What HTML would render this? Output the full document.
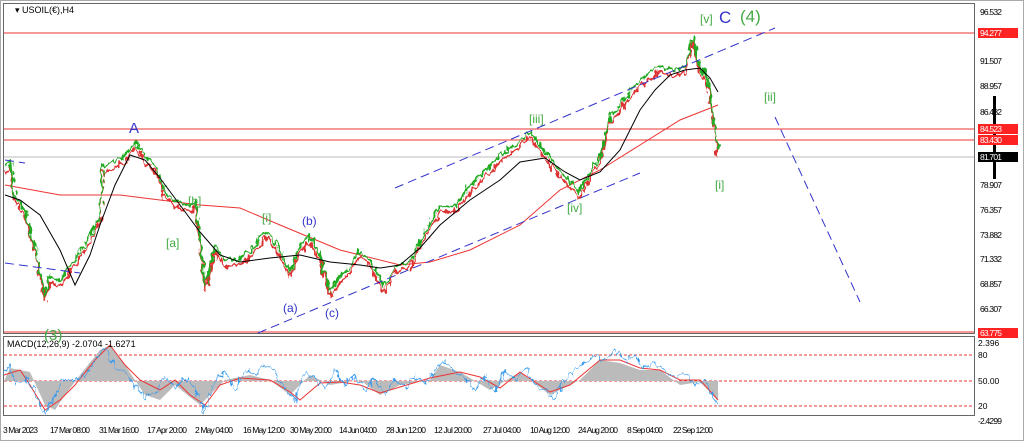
<!DOCTYPE html>
<html><head><meta charset="utf-8"><style>
body{margin:0;width:1024px;height:441px;background:#fff;overflow:hidden;font-family:"Liberation Sans",sans-serif}
svg text{font-family:"Liberation Sans",sans-serif}
</style></head><body>
<svg width="1024" height="441" xmlns="http://www.w3.org/2000/svg">
<defs>
<filter id="jag" x="-5%" y="-20%" width="110%" height="140%">
<feTurbulence type="fractalNoise" baseFrequency="0.25 0.12" numOctaves="2" seed="3"/>
<feDisplacementMap in="SourceGraphic" scale="10" xChannelSelector="R" yChannelSelector="G"/>
</filter>
</defs>
<rect x="0" y="0" width="1024" height="441" fill="#fff"/>
<rect x="0.5" y="0.5" width="1023" height="440" fill="none" stroke="#aaa"/>
<rect x="3.5" y="3.5" width="971" height="330" fill="none" stroke="#666"/>
<rect x="3.5" y="336.5" width="971" height="79" fill="none" stroke="#666"/>
<line x1="4" y1="33" x2="974" y2="33" stroke="#e33" />
<line x1="4" y1="129" x2="974" y2="129" stroke="#e33" />
<line x1="4" y1="140" x2="974" y2="140" stroke="#e33" />
<line x1="4" y1="157" x2="974" y2="157" stroke="#bbb" />
<line x1="4" y1="332" x2="974" y2="332" stroke="#e33" />
<text x="15" y="13" font-size="9" fill="#000">▾ USOIL(€),H4</text>
<polyline fill="none" stroke="#e33" stroke-width="1" points="5,185 60,195 120,195 160,200 200,205 240,208 280,225 340,250 400,265 430,262 470,250 520,225 560,190 600,170 640,145 680,120 718,105"/>
<g filter="url(#jag)">
<polyline fill="none" stroke="#d33" stroke-width="2" points="5,172 10,167 15,202 25,217 35,252 45,302 50,282 60,287 70,272 80,257 90,242 100,222 103,172 115,167 125,162 135,147 145,162 155,172 165,197 175,207 190,212 195,207 200,242 205,292 215,252 225,267 240,264 250,257 265,237 275,247 290,277 300,252 310,242 320,262 330,297 340,282 350,272 360,257 370,267 385,292 395,272 410,267 420,247 440,212 455,212 470,192 490,172 505,157 520,147 530,137 545,157 555,172 570,187 580,197 590,177 600,162 610,122 620,112 630,97 645,82 660,72 675,77 685,72 692,42 700,72 708,87 712,112 718,157"/>
<polyline fill="none" stroke="#2a2" stroke-width="2" points="5,166 10,161 15,196 25,211 35,246 45,296 50,276 60,281 70,266 80,251 90,236 100,216 103,166 115,161 125,156 135,141 145,156 155,166 165,191 175,201 190,206 195,201 200,236 205,286 215,246 225,261 240,258 250,251 265,231 275,241 290,271 300,246 310,236 320,256 330,291 340,276 350,266 360,251 370,261 385,286 395,266 410,261 420,241 440,206 455,206 470,186 490,166 505,151 520,141 530,131 545,151 555,166 570,181 580,191 590,171 600,156 610,116 620,106 630,91 645,76 660,66 675,71 685,66 692,36 700,66 708,81 712,106 718,151"/>
</g>
<polyline fill="none" stroke="#000" stroke-width="1" points="5,195 20,200 40,215 60,250 75,285 90,255 100,225 115,185 130,155 145,160 160,178 180,205 200,232 220,255 240,262 270,258 300,255 330,262 360,265 380,268 400,265 420,248 440,225 470,200 500,180 520,162 545,158 565,172 580,180 600,172 620,150 640,110 655,90 670,75 685,70 700,68 710,78 718,92"/>
<g stroke="#33c" stroke-width="1" stroke-dasharray="9,5" fill="none">
<line x1="395" y1="188" x2="775" y2="28"/>
<line x1="258" y1="333" x2="640" y2="173"/>
<line x1="5" y1="263" x2="80" y2="273"/>
<line x1="5" y1="160" x2="25" y2="163"/>
<line x1="775" y1="117" x2="860" y2="302"/>
</g>
<g font-size="12" fill="#33c">
<text x="129" y="133" font-size="15">A</text>
<text x="302" y="225">(b)</text>
<text x="283" y="312">(a)</text>
<text x="325" y="317">(c)</text>
<text x="719" y="23" font-size="17">C</text>
</g>
<g font-size="12" fill="#4a4">
<text x="188" y="205">[b]</text>
<text x="166" y="247">[a]</text>
<text x="262" y="222">[i]</text>
<text x="529" y="123">[iii]</text>
<text x="567" y="212">[iv]</text>
<text x="700" y="23">[v]</text>
<text x="740" y="22" font-size="17">(4)</text>
<text x="764" y="101">[ii]</text>
<text x="715" y="189">[i]</text>
<text x="44" y="340" font-size="15">(3)</text>
</g>
<g font-size="8.5" fill="#000">
<text x="980" y="15" textLength="22">96.532</text>
<text x="980" y="64" textLength="22">91.507</text>
<text x="980" y="89" textLength="22">88.957</text>
<text x="980" y="115" textLength="22">86.482</text>
<text x="980" y="188" textLength="22">78.907</text>
<text x="980" y="213" textLength="22">76.357</text>
<text x="980" y="238" textLength="22">73.882</text>
<text x="980" y="262" textLength="22">71.332</text>
<text x="980" y="287" textLength="22">68.857</text>
<text x="980" y="312" textLength="22">66.307</text>
<text x="978" y="346">2.396</text>
<text x="978" y="358">80</text>
<text x="978" y="384">50.00</text>
<text x="978" y="409">20</text>
<text x="978" y="424" textLength="24">-2.4299</text>
</g>
<rect x="993" y="96" width="3" height="83" fill="#000"/>
<g font-size="8.5" fill="#fff">
<rect x="978" y="28" width="40" height="10" fill="#f22"/><text x="980" y="36" textLength="22">94.277</text>
<rect x="978" y="124" width="40" height="10" fill="#f22"/><text x="980" y="132" textLength="22">84.523</text>
<rect x="978" y="135" width="40" height="10" fill="#f22"/><text x="980" y="143" textLength="22">83.430</text>
<rect x="978" y="152" width="40" height="10" fill="#000"/><text x="980" y="160" textLength="22">81.701</text>
<rect x="978" y="328" width="40" height="10" fill="#f22"/><text x="980" y="336" textLength="22">63.775</text>
</g>
<g stroke="#e33" stroke-dasharray="3,2"><line x1="4" y1="355" x2="974" y2="355"/><line x1="4" y1="381" x2="974" y2="381"/><line x1="4" y1="406" x2="974" y2="406"/></g>
<path d="M4,381 L10,368 30,372 45,405 55,410 65,395 80,375 100,350 110,345 125,365 145,395 160,400 175,385 200,405 210,395 225,380 250,375 270,380 290,395 310,375 330,385 360,380 380,395 400,385 430,380 440,365 460,372 490,390 520,372 550,395 580,380 600,360 620,363 640,370 660,370 680,385 700,382 718,400 718,381 Z" fill="#bbb"/>
<polyline fill="none" stroke="#e33" points="4,375 20,370 30,385 45,410 60,400 75,385 95,360 110,345 125,365 140,380 160,390 175,380 190,395 205,405 220,385 240,378 270,380 290,392 300,400 320,383 340,382 360,385 380,393 400,387 430,378 460,372 480,377 500,388 520,372 550,392 570,385 600,360 620,360 640,368 660,370 680,380 700,380 718,400"/>
<g filter="url(#jag)">
<polyline fill="none" stroke="#39e" points="4,375 10,365 15,385 25,378 35,392 45,414 55,395 65,378 70,382 80,378 90,370 100,352 105,348 115,368 125,372 135,385 145,398 155,395 165,375 175,388 185,378 195,390 205,412 215,380 225,372 235,390 245,370 255,375 265,365 275,372 285,390 295,400 305,372 315,378 325,390 335,370 345,385 355,375 365,390 375,378 385,395 395,380 405,388 415,375 425,383 435,370 445,360 455,372 465,378 475,390 485,375 495,392 505,372 515,380 525,368 535,385 545,390 555,398 565,378 575,370 585,362 595,356 605,360 615,350 625,362 635,355 645,368 655,362 665,372 675,378 685,372 695,385 705,380 712,395 718,408"/>
</g>
<text x="7" y="347" font-size="9" fill="#000">MACD(12,26,9) -2.0704 -1.6271</text>
<g font-size="8.5" fill="#000">
<text x="3" y="433" textLength="35">3 Mar 2023</text>
<text x="50" y="433" textLength="40">17 Mar 08:00</text>
<text x="99" y="433" textLength="40">31 Mar 16:00</text>
<text x="147" y="433" textLength="40">17 Apr 20:00</text>
<text x="195" y="433" textLength="38">2 May 04:00</text>
<text x="243" y="433" textLength="42">16 May 12:00</text>
<text x="290" y="433" textLength="42">30 May 20:00</text>
<text x="339" y="433" textLength="38">14 Jun 04:00</text>
<text x="386" y="433" textLength="40">28 Jun 12:00</text>
<text x="434" y="433" textLength="38">12 Jul 20:00</text>
<text x="483" y="433" textLength="38">27 Jul 04:00</text>
<text x="530" y="433" textLength="40">10 Aug 12:00</text>
<text x="578" y="433" textLength="40">24 Aug 20:00</text>
<text x="627" y="433" textLength="36">8 Sep 04:00</text>
<text x="673" y="433" textLength="40">22 Sep 12:00</text>
</g>
</svg>
</body></html>
